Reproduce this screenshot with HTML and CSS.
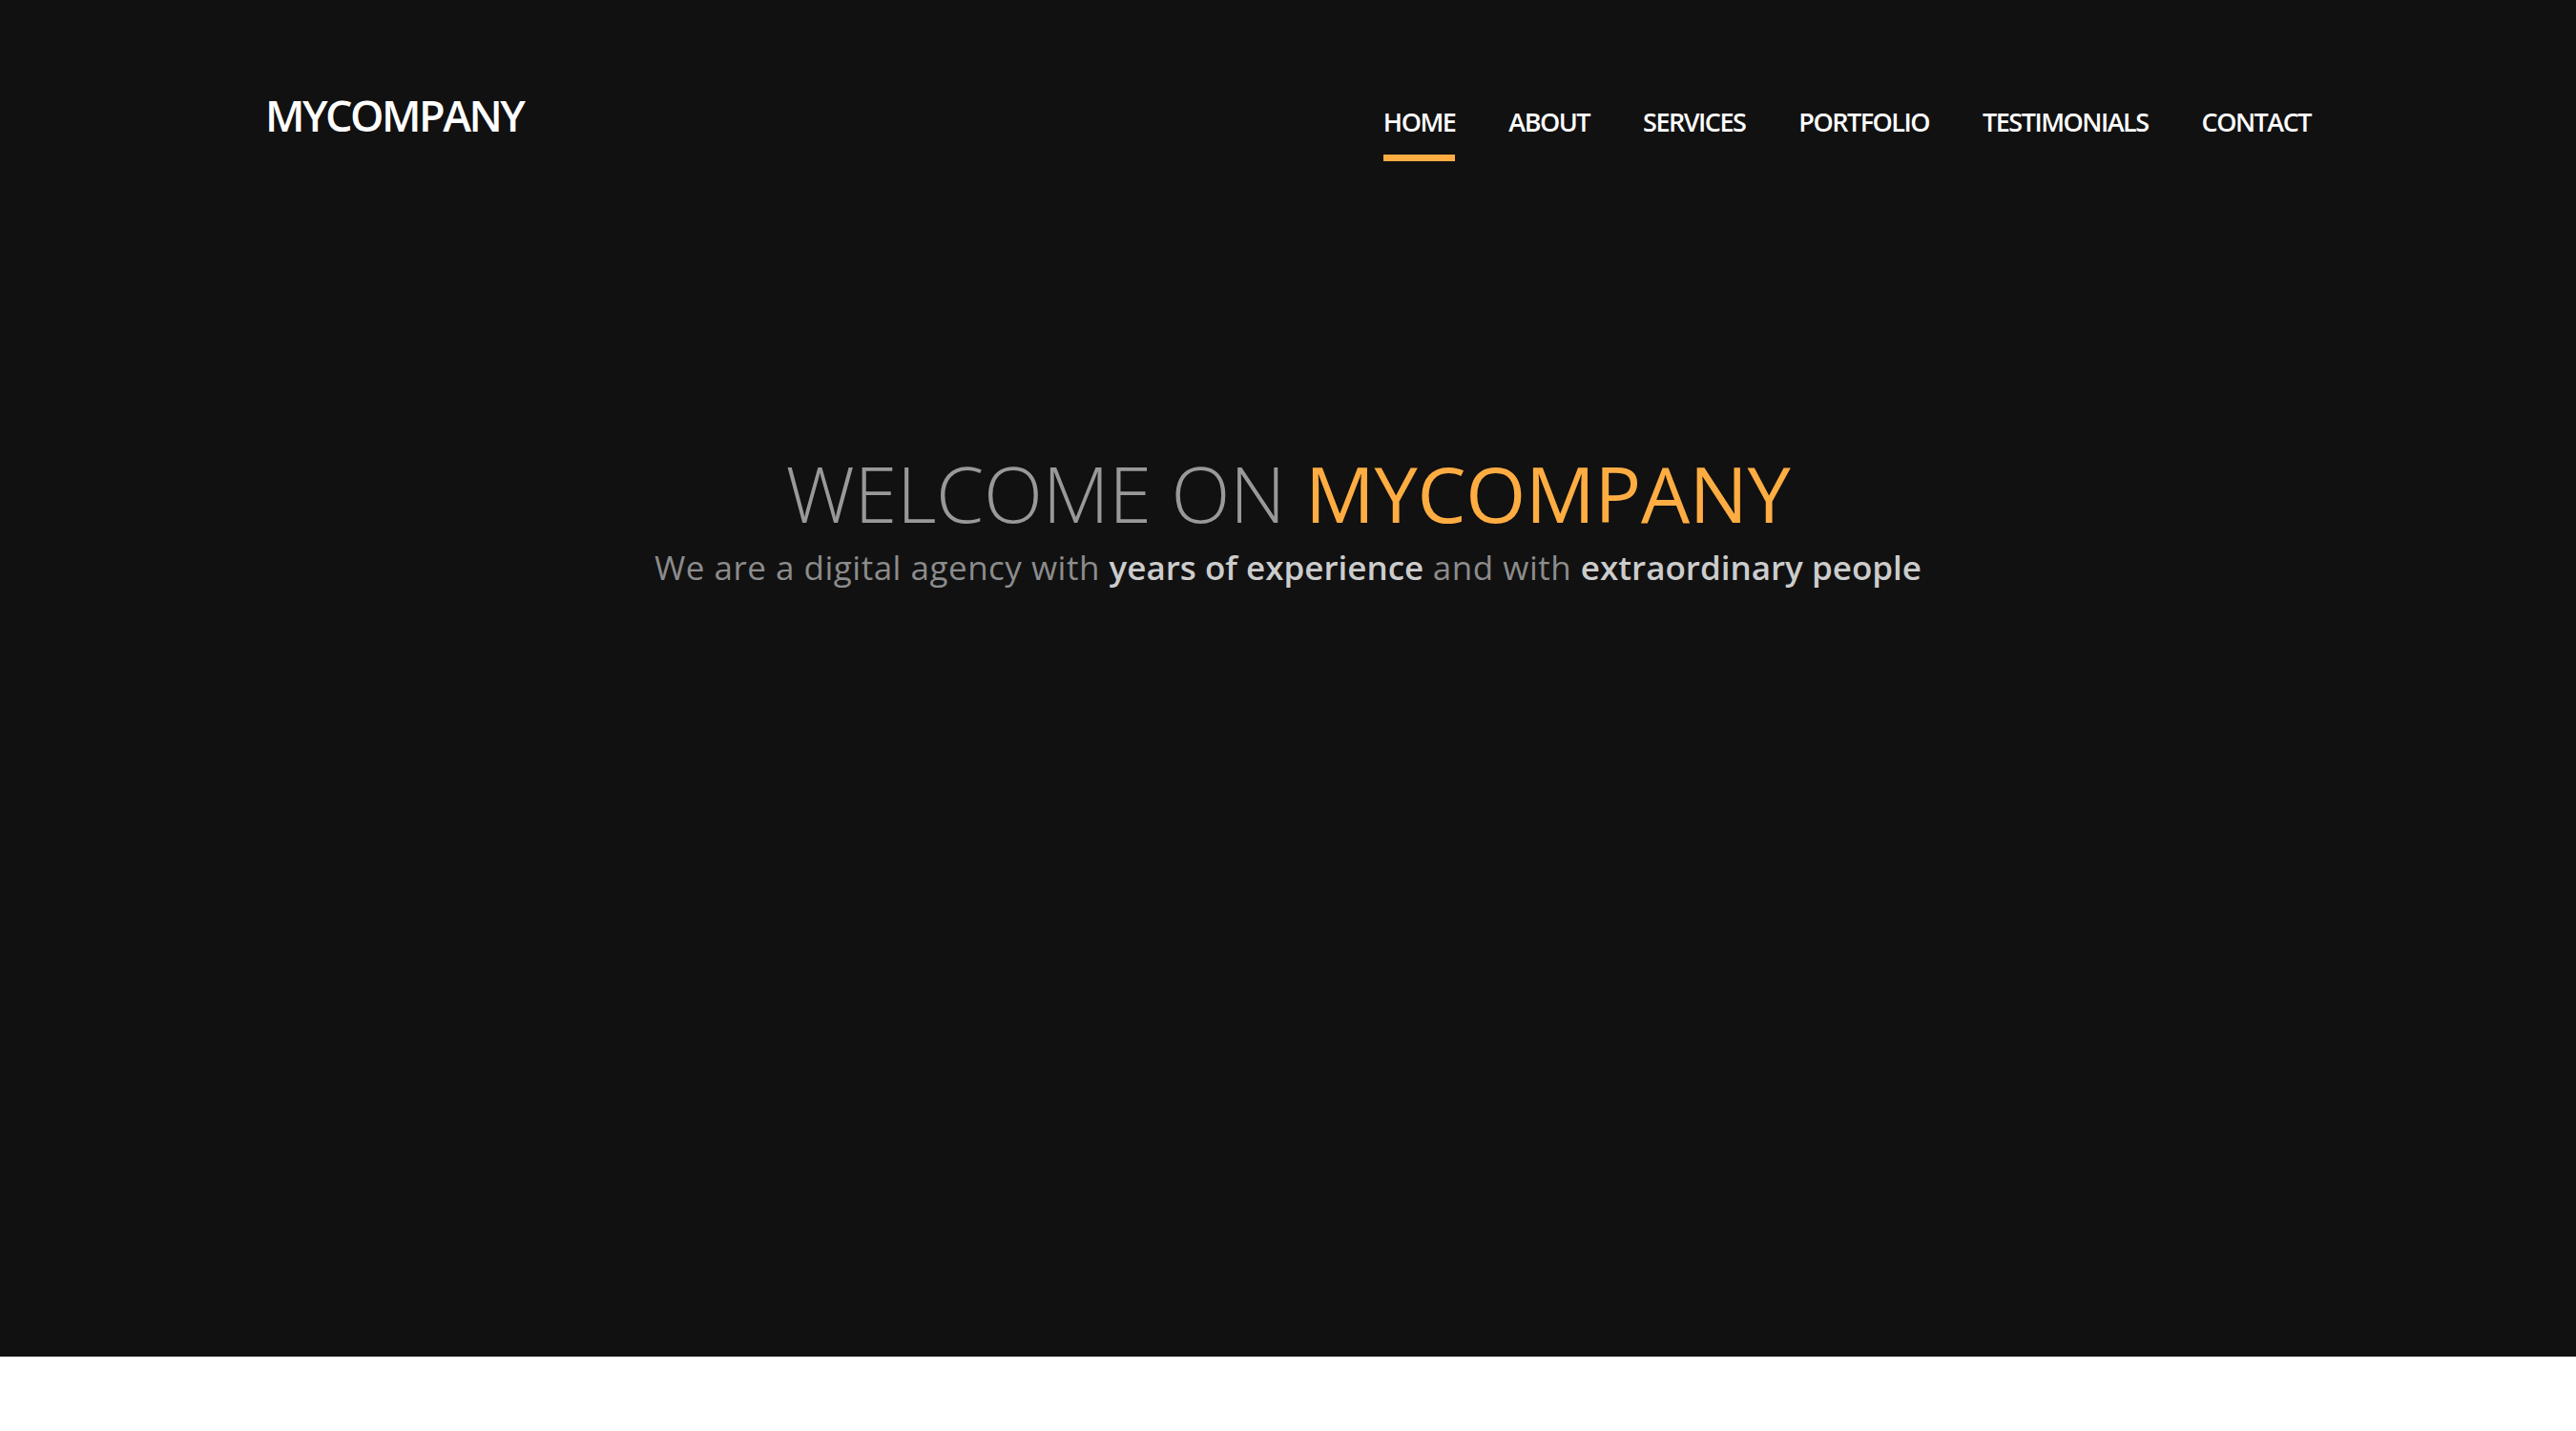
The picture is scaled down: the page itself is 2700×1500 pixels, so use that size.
FILE: index.html
```html
<!DOCTYPE html>
<html lang="en">
<head>
<meta charset="utf-8">
<title>MyCompany</title>
<link rel="stylesheet" href="styles.css">
</head>
<body>
<header class="hero">
  <div class="topbar">
    <div class="logo">MYCOMPANY</div>
    <nav class="menu">
      <a class="menu-link active" href="#">HOME</a>
      <a class="menu-link" href="#">ABOUT</a>
      <a class="menu-link" href="#">SERVICES</a>
      <a class="menu-link" href="#">PORTFOLIO</a>
      <a class="menu-link" href="#">TESTIMONIALS</a>
      <a class="menu-link" href="#">CONTACT</a>
    </nav>
  </div>
  <div class="intro">
    <h1 class="intro-title">WELCOME ON <span class="accent">MYCOMPANY</span></h1>
    <p class="intro-text">We are a digital agency with <strong>years of experience</strong> and with <strong>extraordinary people</strong></p>
  </div>
</header>
<main class="content"></main>
</body>
</html>
```
FILE: styles.css
```css
html, body {
  margin: 0;
  padding: 0;
  background: #ffffff;
  font-family: "Open Sans", "Noto Sans", sans-serif;
}

.hero {
  background: #111111;
  height: 1422px;
  box-sizing: border-box;
  padding-top: 89px;
}

.topbar {
  display: flex;
  justify-content: space-between;
  align-items: flex-start;
  margin: 0 278px;
}

.logo {
  color: #ffffff;
  font-size: 45px;
  font-weight: 600;
  letter-spacing: -2.5px;
  margin-top: 1px;
}

.menu {
  display: flex;
  gap: 56px;
  margin-top: 20px;
}

.menu-link {
  color: #ffffff;
  text-decoration: none;
  font-size: 27px;
  font-weight: 600;
  letter-spacing: -1.5px;
  padding-bottom: 16px;
  border-bottom: 7px solid transparent;
}

.menu-link.active {
  border-bottom-color: #ffad42;
}

.intro {
  margin-top: 292px;
  text-align: center;
}

.intro-title {
  margin: 0;
  font-size: 81px;
  font-weight: 300;
  letter-spacing: -0.3px;
  color: #999999;
}

.accent {
  color: #ffad42;
  font-weight: 400;
}

.intro-text {
  margin: 0;
  font-size: 35px;
  font-weight: 400;
  letter-spacing: 0.5px;
  line-height: 46px;
  color: #8c8c8c;
}

.intro-text strong {
  color: #cccccc;
  font-weight: 600;
  letter-spacing: 0;
}
```
